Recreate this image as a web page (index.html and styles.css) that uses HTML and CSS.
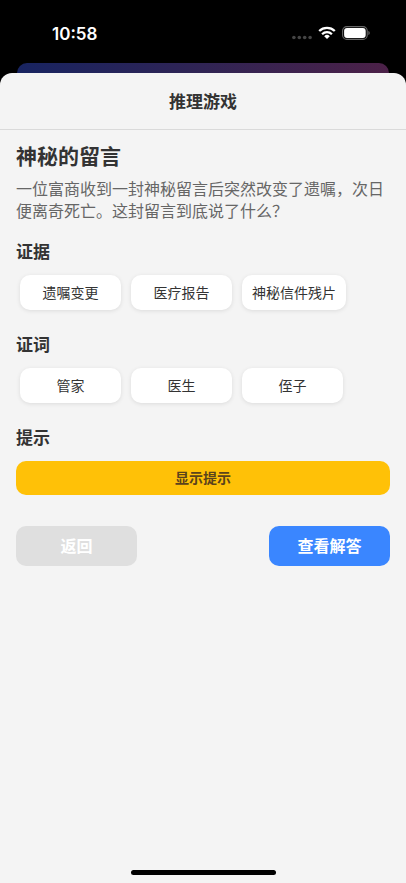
FILE: index.html
```html
<!DOCTYPE html>
<html lang="zh-CN">
<head>
<meta charset="utf-8">
<meta name="viewport" content="width=device-width, initial-scale=1">
<title>推理游戏</title>
<link rel="stylesheet" href="styles.css">
</head>
<body>
<div class="status-bar">
  <span class="time">10:58</span>
  <div class="status-icons">
    <svg class="signal" width="20" height="12" viewBox="0 0 20 12" fill="#454545" aria-hidden="true">
      <circle cx="1.9" cy="9.5" r="1.8"/><circle cx="7.3" cy="9.5" r="1.8"/><circle cx="12.7" cy="9.5" r="1.8"/><circle cx="18.1" cy="9.5" r="1.8"/>
    </svg>
    <svg class="wifi" width="18" height="14" viewBox="0 0 18 14" fill="none" stroke="#fff" stroke-width="2.3" aria-hidden="true">
      <path d="M1.2 5a11.2 11.2 0 0 1 15.6 0"/>
      <path d="M4.1 8.2a7 7 0 0 1 9.8 0"/>
      <path d="M9 13 6.2 10.2a4 4 0 0 1 5.6 0z" fill="#fff" stroke="none"/>
    </svg>
    <svg class="battery" width="28" height="14" viewBox="0 0 28 14" aria-hidden="true">
      <rect x=".6" y=".6" width="24.6" height="12.8" rx="4.2" fill="none" stroke="#686868" stroke-width="1.1"/>
      <rect x="2.1" y="2.1" width="21.6" height="9.8" rx="2.9" fill="#fff"/>
      <path d="M26.4 5v4c.8-.3 1.3-1.1 1.3-2s-.5-1.7-1.3-2z" fill="#686868"/>
    </svg>
  </div>
</div>
<div class="backdrop-card"></div>
<div class="sheet">
  <header class="sheet-header"><h1>推理游戏</h1></header>
  <main class="content">
    <h2 class="case-title">神秘的留言</h2>
    <p class="case-text">一位富商收到一封神秘留言后突然改变了遗嘱，次日便离奇死亡。这封留言到底说了什么？</p>
    <section class="group">
      <h3>证据</h3>
      <div class="chips">
        <button class="chip" type="button">遗嘱变更</button>
        <button class="chip" type="button">医疗报告</button>
        <button class="chip" type="button">神秘信件残片</button>
      </div>
    </section>
    <section class="group">
      <h3>证词</h3>
      <div class="chips">
        <button class="chip" type="button">管家</button>
        <button class="chip" type="button">医生</button>
        <button class="chip" type="button">侄子</button>
      </div>
    </section>
    <section class="group">
      <h3>提示</h3>
      <button class="hint" type="button">显示提示</button>
    </section>
    <div class="actions">
      <button class="action back" type="button">返回</button>
      <button class="action solve" type="button">查看解答</button>
    </div>
  </main>
  <div class="home-indicator"></div>
</div>
</body>
</html>
```
FILE: styles.css
```css
* {
  box-sizing: border-box;
}

body {
  margin: 0;
  min-height: 100vh;
  display: flex;
  flex-direction: column;
  background: #000;
  color: #333;
  font-family: Inter, "Noto Sans CJK SC", sans-serif;
}

h1, h2, h3, p {
  margin: 0;
}

button {
  border: 0;
  border-radius: 10px;
  padding: 0 10px 2px;
  font-family: inherit;
  cursor: pointer;
}

.status-bar {
  display: flex;
  align-items: center;
  justify-content: space-between;
  height: 63px;
  padding: 4px 36px 0 52px;
  color: #fff;
}

.time {
  font-size: 17px;
  line-height: 22px;
  font-weight: 600;
}

.status-icons {
  display: flex;
  align-items: center;
  gap: 6px;
  padding-bottom: 2px;
}

.signal {
  margin-top: 3px;
}

.backdrop-card {
  height: 10px;
  margin: 0 17px;
  border-radius: 10px 10px 0 0;
  background: linear-gradient(90deg, #182461, #302454 50%, #4c2148);
}

.sheet {
  flex: 1;
  display: flex;
  flex-direction: column;
  border-radius: 12px 12px 0 0;
  background: #f4f4f4;
}

.sheet-header {
  padding: 17px 0 15px;
  border-bottom: 1px solid #dadada;
  text-align: center;
}

.sheet-header h1 {
  font-size: 17px;
  line-height: 24px;
  font-weight: 700;
}

.content {
  padding: 13px 16px;
}

.case-title {
  font-size: 21px;
  line-height: 28px;
  margin-bottom: 6px;
}

.case-text {
  margin-right: -8px;
  color: #666;
  font-family: "Noto Sans CJK SC", sans-serif;
  font-size: 16px;
  line-height: 22px;
}

.group {
  margin-top: 19px;
}

.group h3 {
  font-size: 17px;
  line-height: 24px;
  margin-bottom: 11px;
}

.chips {
  display: flex;
  gap: 10px;
  padding: 0 4px 4px;
}

.chip {
  min-width: 101px;
  height: 35px;
  background: #fff;
  color: #333;
  font-size: 14px;
  box-shadow: 0 1px 4px rgba(0, 0, 0, 0.1);
}

.hint {
  display: block;
  width: 100%;
  height: 34px;
  background: #ffc107;
  color: #5a431c;
  font-size: 14px;
  font-weight: 600;
}

.actions {
  display: flex;
  justify-content: space-between;
  margin-top: 31px;
}

.action {
  width: 121px;
  height: 40px;
  color: #fff;
  font-size: 16px;
  font-weight: 700;
}

.back {
  background: #dfdfdf;
}

.solve {
  background: #3a86ff;
}

.home-indicator {
  width: 145px;
  height: 5px;
  margin: auto auto 8px;
  border-radius: 3px;
  background: #000;
}
```
